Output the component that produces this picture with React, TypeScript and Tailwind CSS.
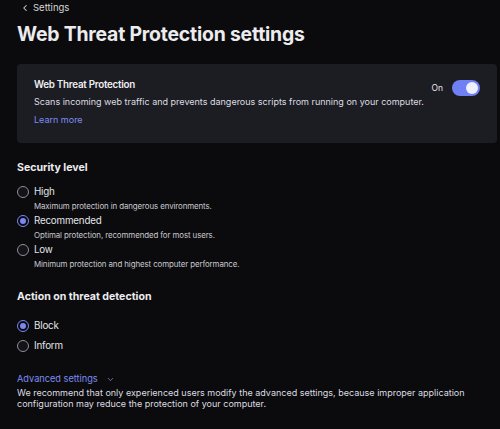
import { ChevronLeft, ChevronDown } from "lucide-react";

type Option = { label: string; desc?: string; checked?: boolean };

function Radio({ checked }: { checked?: boolean }) {
  return checked ? (
    <span className="w-[12px] h-[12px] rounded-full border-[1.5px] border-[#7b88f2] flex items-center justify-center shrink-0">
      <span className="w-[6px] h-[6px] rounded-full bg-[#7b88f2]" />
    </span>
  ) : (
    <span className="w-[12px] h-[12px] rounded-full border-[1.5px] border-[#8d8d9c] bg-[#141418] shrink-0" />
  );
}

function RadioRow({ label, desc, checked }: Option) {
  return (
    <div className="flex flex-col">
      <div className="flex items-center gap-[5px] h-[14px]">
        <Radio checked={checked} />
        <span className="text-[9.8px] tracking-[-0.2px] text-[#e4e4e8]">{label}</span>
      </div>
      {desc && (
        <p className="pl-[17px] text-[7.9px] tracking-[-0.1px] leading-[14px] text-[#c9c9cf]">{desc}</p>
      )}
    </div>
  );
}

export default function App() {
  const levels: Option[] = [
    { label: "High", desc: "Maximum protection in dangerous environments." },
    { label: "Recommended", desc: "Optimal protection, recommended for most users.", checked: true },
    { label: "Low", desc: "Minimum protection and highest computer performance." },
  ];

  return (
    <div
      className="w-[500px] h-[429px] overflow-hidden bg-[#0b0b0d] text-[#e6e6ea] pl-[17px] pr-[3px]"
      style={{ fontFamily: "Inter, 'Noto Sans', sans-serif" }}
    >
      {/* Back link */}
      <div className="flex items-center gap-[3px] h-[16px] pl-[3px] text-[9.5px] text-[#d6d6da]">
        <ChevronLeft className="w-[10px] h-[10px]" strokeWidth={2.5} />
        <span>Settings</span>
      </div>

      {/* Title */}
      <h1 className="mt-[4px] text-[19.4px] leading-[28px] font-bold tracking-[-0.2px] text-[#ececef]">
        Web Threat Protection settings
      </h1>

      {/* Card */}
      <div className="mt-[16px] h-[79px] rounded-[4px] bg-[#1c1c23] px-[17px] pt-[14px] flex">
        <div className="flex-1">
          <h3 className="text-[9.8px] leading-[14px] font-semibold tracking-[-0.25px] text-[#f0f0f2]">
            Web Threat Protection
          </h3>
          <p className="mt-[3px] text-[9px] leading-[14px] text-[#dcdce0] whitespace-nowrap">
            Scans incoming web traffic and prevents dangerous scripts from running on your computer.
          </p>
          <a className="block mt-[4px] text-[9px] leading-[14px] text-[#7d8cf0]">Learn more</a>
        </div>
        <div className="flex items-start gap-[9px] pt-[2px]">
          <span className="text-[8.5px] leading-[16px] text-[#e6e6ea]">On</span>
          <span className="w-[28px] h-[16px] rounded-full bg-[#6f80f4] flex items-center justify-end pr-[2px]">
            <span className="w-[12px] h-[12px] rounded-full bg-[#eef0ff]" />
          </span>
        </div>
      </div>

      {/* Security level */}
      <h2 className="mt-[17px] text-[10.6px] leading-[16px] font-bold text-[#ececef]">Security level</h2>
      <div className="mt-[9px] flex flex-col gap-[1px]">
        {levels.map((o) => (
          <RadioRow key={o.label} {...o} />
        ))}
      </div>

      {/* Action */}
      <h2 className="mt-[18px] text-[10.6px] leading-[16px] font-bold text-[#ececef]">Action on threat detection</h2>
      <div className="mt-[14px] flex flex-col gap-[6px]">
        <RadioRow label="Block" checked />
        <RadioRow label="Inform" />
      </div>

      {/* Advanced */}
      <div className="mt-[19px] flex items-center gap-[8px] text-[9.2px] leading-[14px] text-[#7d8cf0]">
        <span>Advanced settings</span>
        <ChevronDown className="w-[9px] h-[9px]" strokeWidth={2} />
      </div>
      <p className="mt-[1px] text-[9px] leading-[11px] text-[#dcdce0]">
        We recommend that only experienced users modify the advanced settings, because improper application
        <br />
        configuration may reduce the protection of your computer.
      </p>
    </div>
  );
}
